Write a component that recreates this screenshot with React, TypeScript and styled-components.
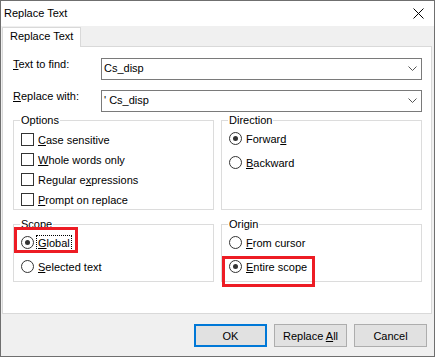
import React from 'react';
import styled, { createGlobalStyle } from 'styled-components';

const GlobalStyle = createGlobalStyle`
  html,
  body {
    margin: 0;
    padding: 0;
    background: #fff;
  }

  body {
    font-family: 'Liberation Sans', Arial, sans-serif;
    font-size: 11px;
    color: #000;
  }

  * {
    box-sizing: border-box;
  }
`;

const Window = styled.div`
  width: 435px;
  height: 357px;
  border: 1px solid #6f6f6f;
  background: #f0f0f0;
  display: flex;
  flex-direction: column;
`;

const TitleBar = styled.div`
  flex: none;
  height: 25px;
  background: #fff;
  display: flex;
  align-items: center;
  justify-content: space-between;
  padding: 0 10px 0 3px;
  line-height: 13px;
`;

const Body = styled.div`
  flex: 1;
  display: flex;
  flex-direction: column;
  padding: 1px 2px 0 1px;
`;

const TabStrip = styled.div`
  display: flex;
  height: 19px;
`;

const Tab = styled.div`
  position: relative;
  z-index: 1;
  height: 20px;
  padding: 2px 7px 0;
  line-height: 13px;
  background: #fff;
  border: 1px solid #d9d9d9;
  border-bottom: none;
`;

const Panel = styled.div`
  height: 268px;
  background: #fff;
  border: 1px solid #d9d9d9;
  padding: 11px 9px 0 10px;
  display: flex;
  flex-direction: column;
`;

const FieldRow = styled.div`
  display: flex;
  align-items: flex-start;

  & + & {
    margin-top: 10px;
  }
`;

const FieldLabel = styled.span`
  width: 88px;
  flex: none;
  line-height: 13px;
`;

const Combo = styled.div`
  flex: 1;
  height: 22px;
  border: 1px solid #7a7a7a;
  background: #fff;
  display: flex;
  align-items: center;
  justify-content: space-between;
  padding: 0 4px 2px 2px;
  line-height: 13px;
`;

const Groups = styled.div`
  margin-top: 2px;
  display: grid;
  grid-template-columns: 1fr 1fr;
  grid-template-rows: 96px 64px;
  column-gap: 7px;
  row-gap: 8px;
`;

const Group = styled.fieldset<{ $gap: number; $top: number }>`
  margin: 0;
  min-width: 0;
  border: 1px solid #dcdcdc;
  padding: ${(p) => p.$top}px 7px 0;
  display: flex;
  flex-direction: column;
  gap: ${(p) => p.$gap}px;
`;

const Legend = styled.legend`
  padding: 0 1px;
  margin-left: -1px;
  line-height: 13px;
`;

const Option = styled.label`
  position: relative;
  display: flex;
  align-items: center;
  height: 13px;
  line-height: 13px;
`;

const Box = styled.span<{ $round?: boolean; $checked?: boolean }>`
  width: 13px;
  height: 13px;
  flex: none;
  border: 1px solid #333;
  background: #fff;
  border-radius: ${(p) => (p.$round ? '50%' : '0')};
  display: flex;
  align-items: center;
  justify-content: center;

  &::after {
    content: '';
    width: 5px;
    height: 5px;
    border-radius: 50%;
    background: #333;
    display: ${(p) => (p.$checked ? 'block' : 'none')};
  }
`;

const Caption = styled.span<{ $focused?: boolean }>`
  margin-left: 2px;
  padding: 0 1px;
  line-height: 14px;
  border: 1px ${(p) => (p.$focused ? 'dotted #000' : 'solid transparent')};
`;

const Key = styled.span`
  text-decoration: underline;
`;

const Mark = styled.span<{ $left: number; $top: number; $w: number; $h: number }>`
  position: absolute;
  left: ${(p) => p.$left}px;
  top: ${(p) => p.$top}px;
  width: ${(p) => p.$w}px;
  height: ${(p) => p.$h}px;
  border: 3px solid #ed1c24;
  pointer-events: none;
`;

const ButtonRow = styled.div`
  display: flex;
  justify-content: flex-end;
  gap: 7px;
  margin-top: 10px;
  padding-right: 5px;
`;

const Button = styled.button<{ $default?: boolean }>`
  width: 73px;
  height: 23px;
  padding: 0;
  font: inherit;
  color: #000;
  background: #e1e1e1;
  border: ${(p) => (p.$default ? '2px solid #0078d7' : '1px solid #adadad')};
`;

const CloseIcon = () => (
  <svg width="11" height="11" viewBox="0 0 11 11">
    <path d="M0.5 0.5 L10.5 10.5 M10.5 0.5 L0.5 10.5" stroke="#000" strokeWidth="1" fill="none" />
  </svg>
);

const Chevron = () => (
  <svg width="9" height="5" viewBox="0 0 9 5">
    <polyline points="0.5,0.5 4.5,4.5 8.5,0.5" stroke="#555" strokeWidth="1" fill="none" />
  </svg>
);

const Check: React.FC<{ children: React.ReactNode }> = ({ children }) => (
  <Option>
    <Box />
    <Caption>{children}</Caption>
  </Option>
);

interface RadioProps {
  checked?: boolean;
  focused?: boolean;
  children: React.ReactNode;
  mark?: { left: number; top: number; w: number; h: number };
}

const Radio: React.FC<RadioProps> = ({ checked, focused, children, mark }) => (
  <Option>
    <Box $round $checked={checked} />
    <Caption $focused={focused}>{children}</Caption>
    {mark && <Mark $left={mark.left} $top={mark.top} $w={mark.w} $h={mark.h} />}
  </Option>
);

const App: React.FC = () => (
  <>
    <GlobalStyle />
    <Window>
      <TitleBar>
        <span>Replace Text</span>
        <CloseIcon />
      </TitleBar>
      <Body>
        <TabStrip>
          <Tab>Replace Text</Tab>
        </TabStrip>
        <Panel>
          <FieldRow>
            <FieldLabel>
              <Key>T</Key>ext to find:
            </FieldLabel>
            <Combo>
              <span>Cs_disp</span>
              <Chevron />
            </Combo>
          </FieldRow>
          <FieldRow>
            <FieldLabel>
              <Key>R</Key>eplace with:
            </FieldLabel>
            <Combo>
              <span>' Cs_disp</span>
              <Chevron />
            </Combo>
          </FieldRow>
          <Groups>
            <Group $gap={7} $top={6}>
              <Legend>Options</Legend>
              <Check>
                <Key>C</Key>ase sensitive
              </Check>
              <Check>
                <Key>W</Key>hole words only
              </Check>
              <Check>
                Regular e<Key>x</Key>pressions
              </Check>
              <Check>
                <Key>P</Key>rompt on replace
              </Check>
            </Group>
            <Group $gap={11} $top={5}>
              <Legend>Direction</Legend>
              <Radio checked>
                Forwar<Key>d</Key>
              </Radio>
              <Radio>
                <Key>B</Key>ackward
              </Radio>
            </Group>
            <Group $gap={11} $top={5}>
              <Legend>Scope</Legend>
              <Radio checked focused mark={{ left: -7, top: -9, w: 64, h: 26 }}>
                <Key>G</Key>lobal
              </Radio>
              <Radio>
                <Key>S</Key>elected text
              </Radio>
            </Group>
            <Group $gap={11} $top={5}>
              <Legend>Origin</Legend>
              <Radio>
                <Key>F</Key>rom cursor
              </Radio>
              <Radio checked mark={{ left: -7, top: -4, w: 93, h: 31 }}>
                <Key>E</Key>ntire scope
              </Radio>
            </Group>
          </Groups>
        </Panel>
        <ButtonRow>
          <Button $default>OK</Button>
          <Button>
            Replace <Key>A</Key>ll
          </Button>
          <Button>Cancel</Button>
        </ButtonRow>
      </Body>
    </Window>
  </>
);

export default App;
